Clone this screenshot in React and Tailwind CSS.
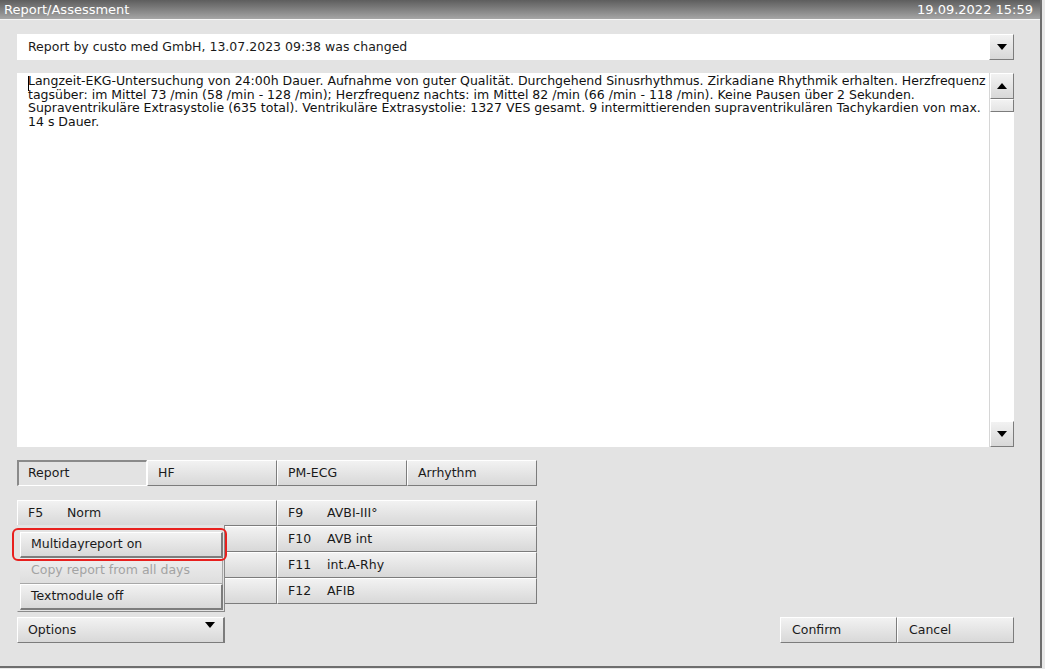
import { useState } from 'react';

const font = { fontFamily: '"DejaVu Sans", Verdana, sans-serif' };

const reportText =
  'Langzeit-EKG-Untersuchung von 24:00h Dauer. Aufnahme von guter Qualität. Durchgehend Sinusrhythmus. Zirkadiane Rhythmik erhalten. Herzfrequenz tagsüber: im Mittel 73 /min (58 /min - 128 /min); Herzfrequenz nachts: im Mittel 82 /min (66 /min - 118 /min). Keine Pausen über 2 Sekunden. Supraventrikuläre Extrasystolie (635 total). Ventrikuläre Extrasystolie: 1327 VES gesamt. 9 intermittierenden supraventrikulären Tachykardien von max. 14 s Dauer.';

const btn =
  'border-t border-l border-t-white border-l-white border-b border-r border-b-[#7c7c7c] border-r-[#7c7c7c] bg-gradient-to-b from-[#f2f2f2] to-[#d8d8d8] text-[#1a1a1a]';

function Caret({ up }) {
  return (
    <svg width="10" height="6" viewBox="0 0 10 6">
      <path d={up ? 'M0 6 L5 0 L10 6 Z' : 'M0 0 L10 0 L5 6 Z'} fill="#000" />
    </svg>
  );
}

function FKey({ k, label }) {
  return (
    <div className={`h-[26px] flex items-center pl-[10px] ${btn}`}>
      <span className="w-[39px]">{k}</span>
      <span>{label}</span>
    </div>
  );
}

export default function App() {
  const [tab, setTab] = useState('Report');
  const tabs = ['Report', 'HF', 'PM-ECG', 'Arrhythm'];

  return (
    <div className="w-[1045px] h-[669px] bg-[#e8e8e8] text-[12.5px]" style={font}>
      <div className="w-[1042px] h-[668px] bg-[#e3e3e3] border-r-2 border-b-2 border-[#6e6e6e] flex flex-col">
        <div className="h-[19px] bg-gradient-to-b from-[#5e5e5e] to-[#a6a6a6] text-white flex items-center justify-between px-[4px] text-[13px]">
          <span>Report/Assessment</span>
          <span className="pr-[3px]">19.09.2022 15:59</span>
        </div>
        <div className="h-px bg-[#f6f6f6]" />

        <div className="ml-[17px] w-[997px] mt-[14px] flex flex-col">
          <div className="flex h-[26px]">
            <div className="flex-1 bg-white flex items-center pl-[11px] text-[#1a1a1a]">
              Report by custo med GmbH, 13.07.2023 09:38 was changed
            </div>
            <div className={`w-[25px] flex items-center justify-center ${btn}`}>
              <Caret />
            </div>
          </div>

          <div className="flex h-[374px] mt-[13px]">
            <div className="flex-1 bg-white pl-[11px] pr-[2px] pt-[1px] leading-[13.6px] text-[#111] relative">
              <span className="absolute left-[11px] top-[3px] w-px h-[15px] bg-black" />
              {reportText}
            </div>
            <div className="w-[25px] flex flex-col bg-white border-l border-[#d6d6d6]">
              <div className={`h-[26px] flex items-center justify-center ${btn}`}>
                <Caret up />
              </div>
              <div className={`h-[13px] ${btn} from-[#ececec] to-[#e4e4e4]`} />
              <div className="flex-1" />
              <div className={`h-[26px] flex items-center justify-center ${btn}`}>
                <Caret />
              </div>
            </div>
          </div>

          <div className="flex mt-[13px] h-[26px]">
            {tabs.map((t) =>
              t === tab ? (
                <div
                  key={t}
                  onClick={() => setTab(t)}
                  className="w-[130px] flex items-center pl-[9px] bg-[#e3e3e3] border-t-2 border-l-2 border-[#8a8a8a] border-b border-r border-b-white border-r-white text-[#1a1a1a]"
                >
                  {t}
                </div>
              ) : (
                <div
                  key={t}
                  onClick={() => setTab(t)}
                  className={`w-[130px] flex items-center pl-[10px] ${btn}`}
                >
                  {t}
                </div>
              )
            )}
          </div>

          <div className="flex mt-[14px]">
            <div className="w-[260px] flex flex-col relative">
              <FKey k="F5" label="Norm" />
              <div className={`h-[26px] ${btn}`} />
              <div className={`h-[26px] ${btn}`} />
              <div className={`h-[26px] ${btn}`} />

              <div className="absolute left-0 top-[25px] w-[208px] h-[87px] bg-[#e3e3e3] border-r border-b border-[#8a8a8a] border-l border-l-[#e3e3e3] pl-[2px] pr-[1px] pt-[7px] flex flex-col">
                <div className={`h-[26px] flex items-center pl-[10px] ${btn} border-b-2 border-r-2`}>
                  Multidayreport on
                </div>
                <div className="h-[26px] flex items-center pl-[11px] bg-gradient-to-b from-[#eeeeee] to-[#dedede] border-b border-r border-[#a8a8a8] text-[#a3a3a3]">
                  Copy report from all days
                </div>
                <div className={`h-[26px] flex items-center pl-[10px] ${btn} border-b-2 border-r-2`}>
                  Textmodule off
                </div>
              </div>
              <div className="absolute left-[-5px] top-[28px] w-[215px] h-[33px] rounded-[6px] border-2 border-[#e8201e]" />
            </div>
            <div className="w-[260px] flex flex-col">
              <FKey k="F9" label="AVBI-III°" />
              <FKey k="F10" label="AVB int" />
              <FKey k="F11" label="int.A-Rhy" />
              <FKey k="F12" label="AFIB" />
            </div>
          </div>

          <div className="flex mt-[13px] h-[26px]">
            <div className={`w-[208px] flex items-center justify-between pl-[10px] pr-[8px] ${btn} border-r-2`}>
              <span>Options</span>
              <span className="-mt-[10px]">
                <Caret />
              </span>
            </div>
            <div className="flex-1" />
            <div className={`w-[117px] flex items-center pl-[11px] ${btn}`}>Confirm</div>
            <div className={`w-[117px] flex items-center pl-[11px] ${btn}`}>Cancel</div>
          </div>
        </div>
      </div>
    </div>
  );
}
